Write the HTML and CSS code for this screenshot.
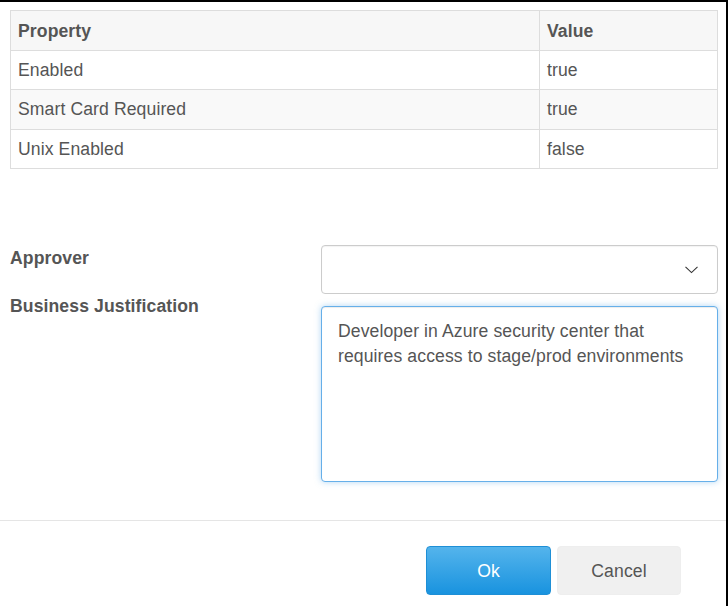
FILE: index.html
```html
<!DOCTYPE html>
<html>
<head>
<meta charset="utf-8">
<link rel="stylesheet" href="styles.css">
</head>
<body>
<div class="modal">
  <div class="modal-body">
    <table class="props">
      <thead>
        <tr><th class="col-prop">Property</th><th>Value</th></tr>
      </thead>
      <tbody>
        <tr><td>Enabled</td><td>true</td></tr>
        <tr class="striped"><td>Smart Card Required</td><td>true</td></tr>
        <tr><td>Unix Enabled</td><td>false</td></tr>
      </tbody>
    </table>
    <div class="form">
      <div class="labels">
        <label>Approver</label>
        <label>Business Justification</label>
      </div>
      <div class="fields">
        <div class="select">
          <svg class="chevron" width="13" height="8" viewBox="0 0 13 8"><polyline points="0.5,0.8 6.5,6.6 12.5,0.8" fill="none" stroke="#333" stroke-width="1.1"/></svg>
        </div>
        <textarea class="justification">Developer in Azure security center that requires access to stage/prod environments</textarea>
      </div>
    </div>
  </div>
  <div class="modal-footer">
    <button class="btn btn-ok">Ok</button>
    <button class="btn btn-cancel">Cancel</button>
  </div>
</div>
</body>
</html>
```
FILE: styles.css
```css
html, body {
  margin: 0;
  padding: 0;
  background: #000;
}
body {
  font-family: "Liberation Sans", Arial, sans-serif;
  font-size: 17.6px;
  letter-spacing: 0.1px;
  color: #555;
}
.modal {
  margin-top: 2px;
  width: 726px;
  height: 604px;
  background: #fff;
}
.modal-body {
  padding: 8px 8px 38px 10px;
}
.props {
  width: 708px;
  border-collapse: collapse;
  table-layout: fixed;
}
.props th, .props td {
  border: 1px solid #ddd;
  padding: 7px 7px;
  line-height: 24px;
  text-align: left;
  color: #555;
}
.props th {
  background: #f7f7f7;
  font-weight: bold;
  padding-top: 8px;
}
.props .col-prop {
  width: 514px;
}
.props .striped td {
  background: #f9f9f9;
  padding-bottom: 8px;
}
.form {
  margin-top: 76px;
  display: flex;
}
.labels {
  width: 311px;
  flex: none;
  display: flex;
  flex-direction: column;
  gap: 23px;
  padding-top: 1px;
}
.labels label {
  font-weight: bold;
  line-height: 25px;
  color: #555;
}
.fields {
  width: 397px;
  flex: none;
  display: flex;
  flex-direction: column;
  gap: 12px;
}
.select {
  box-sizing: border-box;
  height: 49px;
  border: 1px solid #ccc;
  border-radius: 4px;
  display: flex;
  align-items: center;
  justify-content: flex-end;
  padding-right: 19px;
  box-shadow: inset 0 1px 1px rgba(0,0,0,0.05);
}
.chevron {
  display: block;
  margin-top: 1px;
}
.justification {
  box-sizing: border-box;
  width: 397px;
  height: 176px;
  margin: 0;
  padding: 12px 16px;
  font-family: inherit;
  font-size: 17.6px;
  letter-spacing: 0.1px;
  line-height: 25px;
  color: #555;
  border: 1px solid #66afe9;
  border-radius: 4px;
  outline: none;
  resize: none;
  box-shadow: inset 0 1px 1px rgba(0,0,0,0.075), 0 0 6px rgba(102,175,233,0.5);
}
.modal-footer {
  border-top: 1px solid #e5e5e5;
  padding: 25px 45px 0 0;
  display: flex;
  justify-content: flex-end;
  gap: 6px;
}
.btn {
  height: 49px;
  border-radius: 4px;
  font-family: inherit;
  font-size: 17.6px;
  letter-spacing: 0.1px;
  cursor: pointer;
  padding-top: 3px;
}
.btn-ok {
  width: 125px;
  color: #fff;
  border: 1px solid #1e8fd6;
  background: linear-gradient(#54b4ec, #1993df);
}
.btn-cancel {
  width: 124px;
  color: #555;
  border: 1px solid #eee;
  background: #f0f0f0;
}
```
